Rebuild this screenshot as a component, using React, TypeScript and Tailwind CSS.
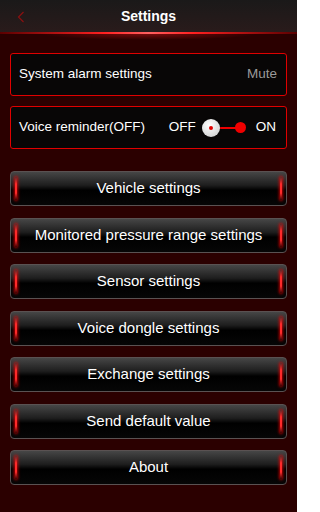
const font = { fontFamily: '"Liberation Sans", Arial, sans-serif' };

const buttons = [
  "Vehicle settings",
  "Monitored pressure range settings",
  "Sensor settings",
  "Voice dongle settings",
  "Exchange settings",
  "Send default value",
  "About",
];

const glow =
  "absolute top-[5px] bottom-[5px] w-[2px] rounded-full bg-[linear-gradient(to_bottom,rgba(255,0,0,0.2),#ff2a2a_30%,#ff2a2a_70%,rgba(255,0,0,0.2))] shadow-[0_0_3px_1px_rgba(255,0,0,0.7)]";

function GlowButton({ label }: { label: string }) {
  return (
    <button className="relative h-[35px] w-full rounded-[4px] border border-[#5a5252] bg-[linear-gradient(to_bottom,#464646_0%,#1e1e1e_40%,#000_55%,#060606_100%)] text-[15px] text-white">
      <span className={`${glow} left-[4px]`} />
      <span className={`${glow} right-[4px]`} />
      <span className="relative">{label}</span>
    </button>
  );
}

export default function App() {
  return (
    <div style={font} className="flex h-[512px] w-[297px] flex-col overflow-hidden bg-[#2b0000]">
      {/* Header */}
      <div className="relative flex h-[33px] items-center justify-center bg-[linear-gradient(to_bottom,#1a1919,#2a1b1b)]">
        <svg className="absolute left-[17px] top-[11px]" width="8" height="12" viewBox="0 0 8 12">
          <path d="M6.5 1 L1.5 6 L6.5 11" fill="none" stroke="#8a1010" strokeWidth="1.2" />
        </svg>
        <span className="text-[14px] font-bold text-white">Settings</span>
        <div className="absolute bottom-[-1px] left-0 right-0 h-[2px] bg-[linear-gradient(to_right,#5a0000,#ff2020_35%,#ff6060_50%,#ff2020_65%,#5a0000)]" />
        <div className="absolute bottom-[-7px] left-[40px] right-[40px] h-[6px] bg-[radial-gradient(ellipse_at_top,rgba(255,30,30,0.35),transparent_70%)]" />
      </div>

      <div className="flex flex-col px-[10px] pt-[20px]">
        {/* System alarm */}
        <div className="flex h-[43px] items-center justify-between rounded-[3px] border border-[#e00000] bg-[#080606] pl-[8px] pr-[9px] text-[13.5px]">
          <span className="text-white">System alarm settings</span>
          <span className="text-[#9a9a9a]">Mute</span>
        </div>

        {/* Voice reminder */}
        <div className="mt-[10px] flex h-[43px] items-center justify-between rounded-[3px] border border-[#e00000] bg-[#080606] pl-[8px] pr-[10px] text-[13.5px] text-white">
          <span>Voice reminder(OFF)</span>
          <div className="flex items-center">
            <span>OFF</span>
            <div className="relative ml-[6px] mr-[10px] flex h-[18px] w-[44px] items-center">
              <div className="absolute left-[9px] right-[4px] h-[2px] bg-[#ee0000]" />
              <div className="absolute right-0 h-[11px] w-[11px] rounded-full bg-[#f00000]" />
              <div className="absolute left-0 flex h-[18px] w-[18px] items-center justify-center rounded-full bg-[radial-gradient(circle_at_40%_35%,#ffffff,#d8d8d8_70%,#b0b0b0)] shadow-[0_0_2px_rgba(0,0,0,0.6)]">
                <div className="h-[4px] w-[4px] rounded-full bg-[#e00000]" />
              </div>
            </div>
            <span>ON</span>
          </div>
        </div>

        {/* Buttons */}
        <div className="mt-[22px] flex flex-col gap-[11.5px]">
          {buttons.map((b) => (
            <GlowButton key={b} label={b} />
          ))}
        </div>
      </div>
    </div>
  );
}
